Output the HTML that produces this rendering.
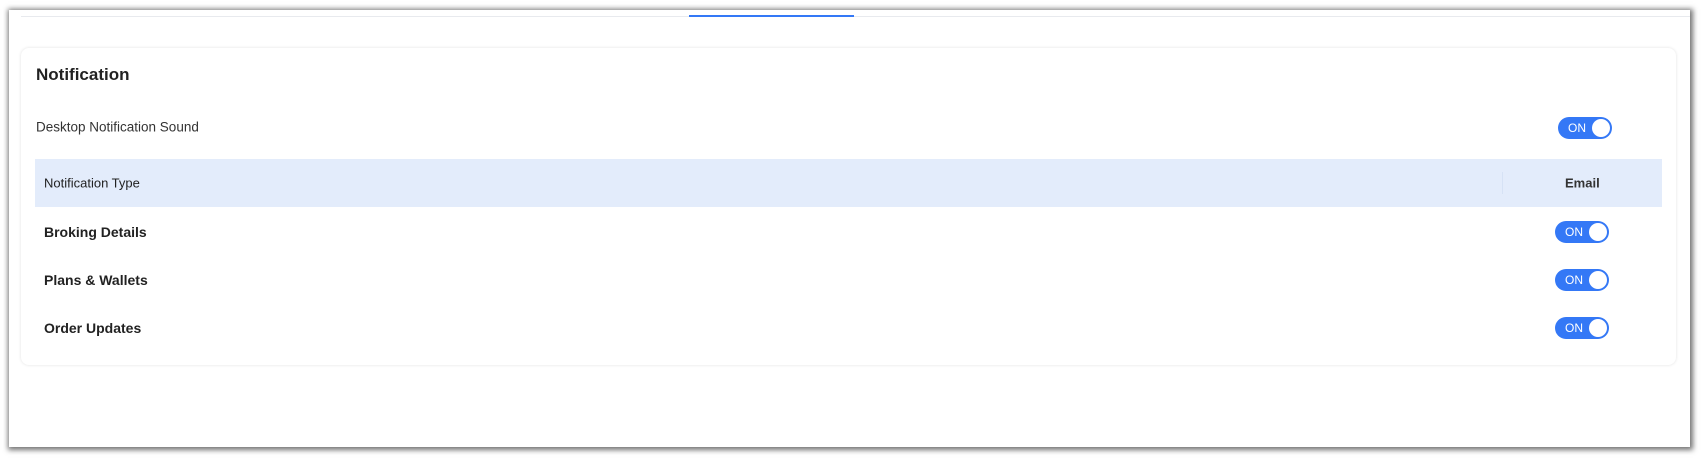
<!DOCTYPE html>
<html><head><style>
*{margin:0;padding:0;box-sizing:border-box}
body{width:1706px;height:464px;background:#fff;font-family:"Liberation Sans",sans-serif;position:relative;overflow:hidden}
.win{position:absolute;left:9px;top:10px;width:1681px;height:437px;background:#fff;box-shadow:1px 1px 5px 2px rgba(0,0,0,.55)}
.tabline{position:absolute;left:21px;width:1669px;top:16px;height:1px;background:#e8eaee}
.tabblue{position:absolute;left:689px;width:165px;top:15px;height:2px;background:#3478f6}
.card{position:absolute;left:21px;top:48px;width:1655px;height:317px;border-radius:8px;box-shadow:0 0 3px rgba(0,0,0,.12);background:#fff}
.t{position:absolute;white-space:nowrap;color:#222;transform:translateY(-50%)}
.tg{position:absolute;width:54px;height:22px;border-radius:11px;background:#3478f6;color:#fff;font-size:12px}
.tg span{position:absolute;left:10px;top:4px}
.tg i{position:absolute;right:2px;top:2px;width:18px;height:18px;border-radius:50%;background:#fff}
.band{position:absolute;left:35px;top:159px;width:1627px;height:48px;background:#e3ecfb}
.sep{position:absolute;left:1502px;top:172px;width:1px;height:22px;background:#d6e2f5}
</style></head><body>
<div class="win"></div>
<div class="tabline"></div>
<div class="tabblue"></div>
<div class="card"></div>
<div class="t" style="left:36px;top:75px;font-size:17px;font-weight:bold">Notification</div>
<div class="t" style="left:36px;top:127px;font-size:13.5px;color:#333">Desktop Notification Sound</div>
<div class="tg" style="left:1558px;top:117px"><span>ON</span><i></i></div>
<div class="band"></div>
<div class="sep"></div>
<div class="t" style="left:44px;top:183px;font-size:13px">Notification Type</div>
<div class="t" style="left:1565px;top:183px;font-size:13px;font-weight:bold;color:#333">Email</div>
<div class="t" style="left:44px;top:232px;font-size:14px;font-weight:bold">Broking Details</div>
<div class="tg" style="left:1555px;top:221px"><span>ON</span><i></i></div>
<div class="t" style="left:44px;top:280px;font-size:14px;font-weight:bold">Plans &amp; Wallets</div>
<div class="tg" style="left:1555px;top:269px"><span>ON</span><i></i></div>
<div class="t" style="left:44px;top:328px;font-size:14px;font-weight:bold">Order Updates</div>
<div class="tg" style="left:1555px;top:317px"><span>ON</span><i></i></div>
</body></html>
